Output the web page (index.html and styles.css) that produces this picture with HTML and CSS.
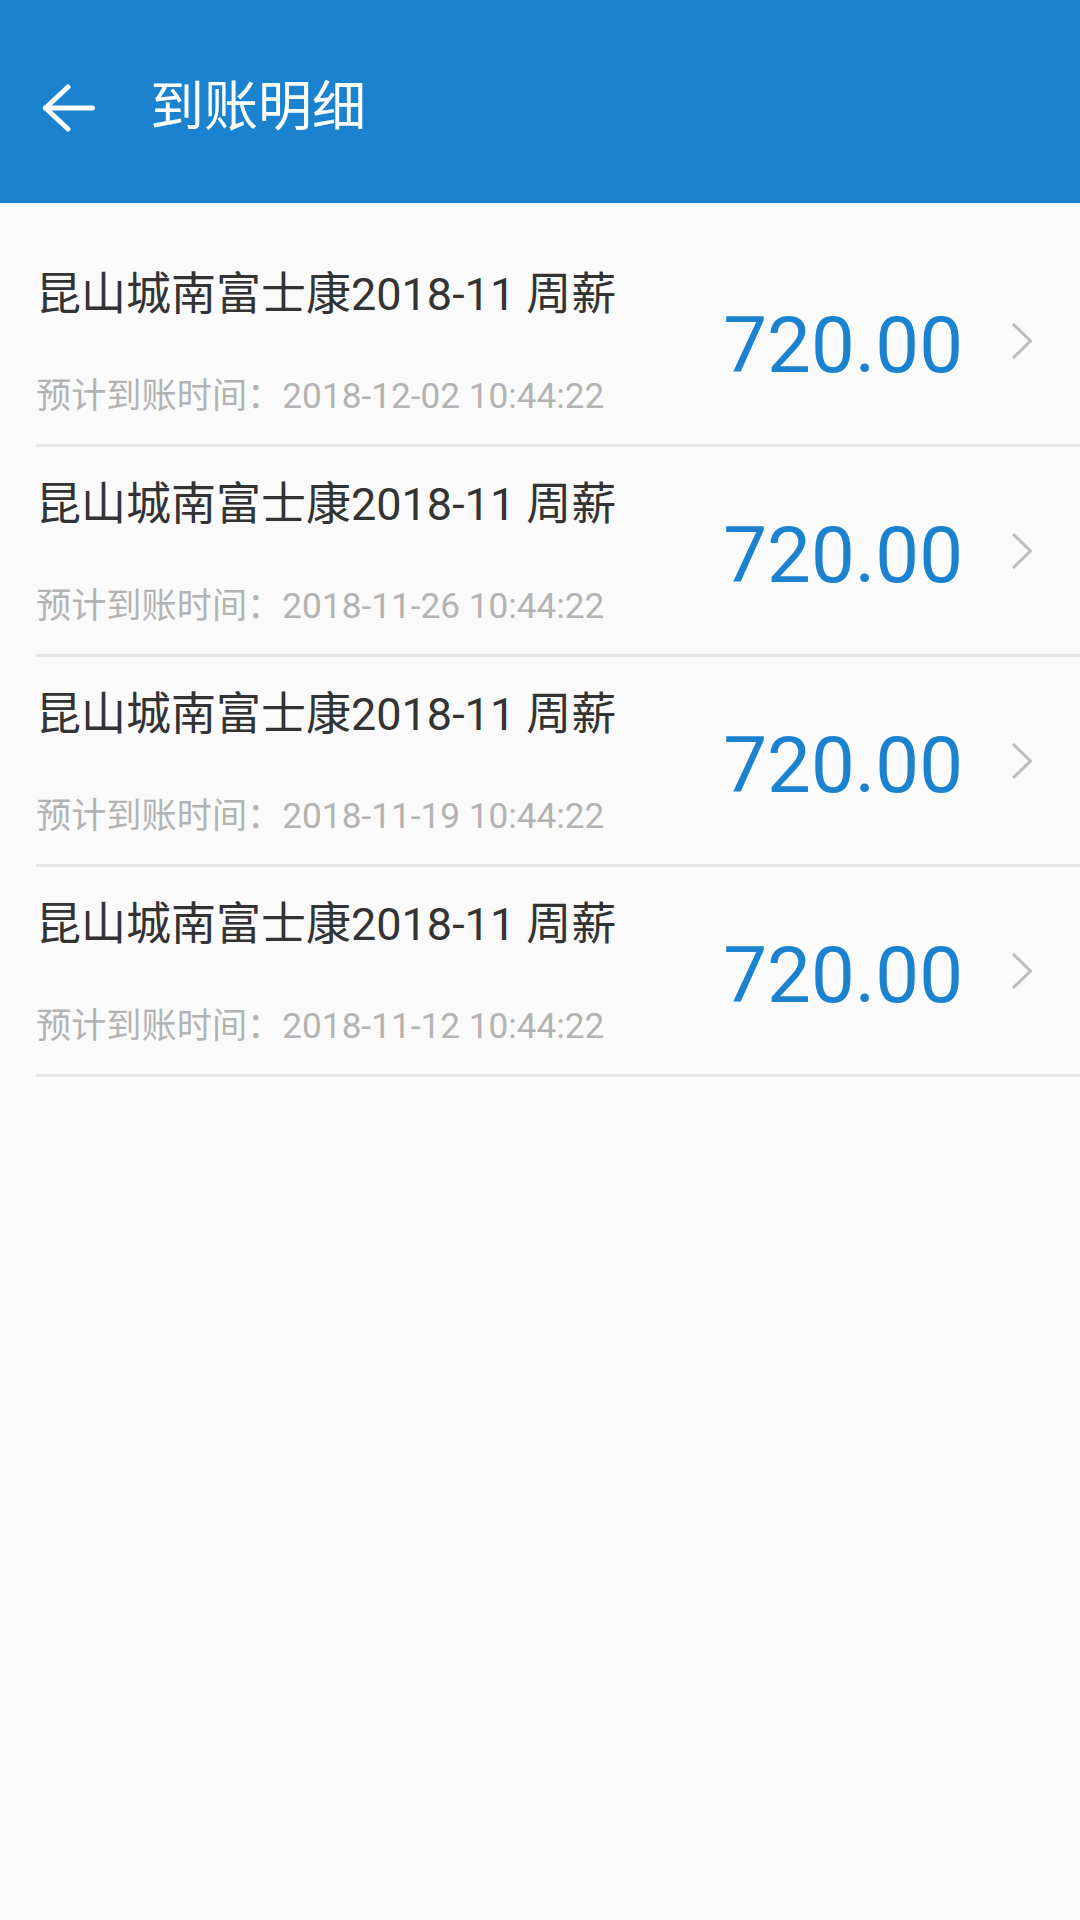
FILE: index.html
```html
<!DOCTYPE html>
<html>
    <head>
        <meta charset="utf-8">
        <title>到账明细</title>
        <link rel="stylesheet" href="styles.css">
    </head>
    <body>

        <div class="topbar">
            <svg class="backarrow" width="54" height="48" viewBox="0 0 54 48">
                <polyline points="26,3 3.5,24 26,45" />
                <line x1="3.5" y1="24" x2="50.5" y2="24" />
            </svg>
            <p class="title">到账明细</p>
        </div>

        <div class="list">

            <div class="item">
                <div class="info">
                    <p class="name">昆山城南富士康2018-11 周薪</p>
                    <p class="date">预计到账时间：2018-12-02 10:44:22</p>
                </div>
                <p class="amount">720.00</p>
                <svg class="chevron" width="22" height="38" viewBox="0 0 22 38">
                    <polyline points="2,2 19.5,19 2,36" />
                </svg>
            </div>

            <div class="item">
                <div class="info">
                    <p class="name">昆山城南富士康2018-11 周薪</p>
                    <p class="date">预计到账时间：2018-11-26 10:44:22</p>
                </div>
                <p class="amount">720.00</p>
                <svg class="chevron" width="22" height="38" viewBox="0 0 22 38">
                    <polyline points="2,2 19.5,19 2,36" />
                </svg>
            </div>

            <div class="item">
                <div class="info">
                    <p class="name">昆山城南富士康2018-11 周薪</p>
                    <p class="date">预计到账时间：2018-11-19 10:44:22</p>
                </div>
                <p class="amount">720.00</p>
                <svg class="chevron" width="22" height="38" viewBox="0 0 22 38">
                    <polyline points="2,2 19.5,19 2,36" />
                </svg>
            </div>

            <div class="item">
                <div class="info">
                    <p class="name">昆山城南富士康2018-11 周薪</p>
                    <p class="date">预计到账时间：2018-11-12 10:44:22</p>
                </div>
                <p class="amount">720.00</p>
                <svg class="chevron" width="22" height="38" viewBox="0 0 22 38">
                    <polyline points="2,2 19.5,19 2,36" />
                </svg>
            </div>

        </div>

    </body>
</html>
```

FILE: styles.css
```css
body{
    margin:0;
    background-color:#fafafa;
    font-family:Roboto, "Noto Sans CJK SC", sans-serif;
}

p{
    margin:0;
}

.topbar{
    box-sizing:border-box;
    height:203px;
    padding-top:12px;
    padding-left:42px;
    display:flex;
    align-items:center;
    background-color:#1b82d0;
}

.backarrow{
    fill:none;
    stroke:white;
    stroke-width:5;
    stroke-linecap:round;
    stroke-linejoin:round;
}

.title{
    margin-left:54px;
    font-size:54px;
    line-height:1;
    color:white;
}

.list{
    padding-top:34px;
    margin-left:36px;
}

.item{
    box-sizing:border-box;
    height:210px;
    display:flex;
    align-items:center;
    padding-right:47px;
    border-bottom:3px solid #e6e6e6;
}

.info{
    flex:1;
    align-self:stretch;
    padding-top:35px;
}

.name{
    font-size:45px;
    line-height:1;
    color:#333333;
    margin-bottom:62px;
}

.date{
    font-size:35.2px;
    line-height:1;
    color:#b3b3b3;
}

.amount{
    font-size:78px;
    line-height:1;
    color:#1b82d0;
    margin-top:10px;
}

.chevron{
    margin-left:48px;
    fill:none;
    stroke:#bdbdbd;
    stroke-width:3;
}
```
